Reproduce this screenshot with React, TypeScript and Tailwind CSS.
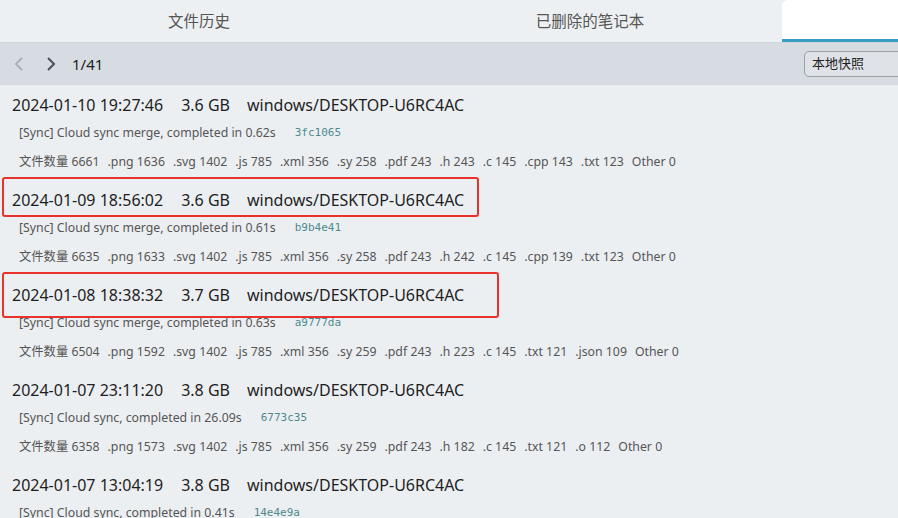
import React from "react";

type Entry = {
  time: string;
  size: string;
  host: string;
  msg: string;
  hash: string;
  stats: [string, string][];
  box?: { w: number; h: number };
};

const entries: Entry[] = [
  {
    time: "2024-01-10 19:27:46",
    size: "3.6 GB",
    host: "windows/DESKTOP-U6RC4AC",
    msg: "[Sync] Cloud sync merge, completed in 0.62s",
    hash: "3fc1065",
    stats: [
      ["文件数量", "6661"], [".png", "1636"], [".svg", "1402"], [".js", "785"], [".xml", "356"], [".sy", "258"],
      [".pdf", "243"], [".h", "243"], [".c", "145"], [".cpp", "143"], [".txt", "123"], ["Other", "0"],
    ],
  },
  {
    time: "2024-01-09 18:56:02",
    size: "3.6 GB",
    host: "windows/DESKTOP-U6RC4AC",
    msg: "[Sync] Cloud sync merge, completed in 0.61s",
    hash: "b9b4e41",
    stats: [
      ["文件数量", "6635"], [".png", "1633"], [".svg", "1402"], [".js", "785"], [".xml", "356"], [".sy", "258"],
      [".pdf", "243"], [".h", "242"], [".c", "145"], [".cpp", "139"], [".txt", "123"], ["Other", "0"],
    ],
    box: { w: 477, h: 40 },
  },
  {
    time: "2024-01-08 18:38:32",
    size: "3.7 GB",
    host: "windows/DESKTOP-U6RC4AC",
    msg: "[Sync] Cloud sync merge, completed in 0.63s",
    hash: "a9777da",
    stats: [
      ["文件数量", "6504"], [".png", "1592"], [".svg", "1402"], [".js", "785"], [".xml", "356"], [".sy", "259"],
      [".pdf", "243"], [".h", "223"], [".c", "145"], [".txt", "121"], [".json", "109"], ["Other", "0"],
    ],
    box: { w: 497, h: 46 },
  },
  {
    time: "2024-01-07 23:11:20",
    size: "3.8 GB",
    host: "windows/DESKTOP-U6RC4AC",
    msg: "[Sync] Cloud sync, completed in 26.09s",
    hash: "6773c35",
    stats: [
      ["文件数量", "6358"], [".png", "1573"], [".svg", "1402"], [".js", "785"], [".xml", "356"], [".sy", "259"],
      [".pdf", "243"], [".h", "182"], [".c", "145"], [".txt", "121"], [".o", "112"], ["Other", "0"],
    ],
  },
  {
    time: "2024-01-07 13:04:19",
    size: "3.8 GB",
    host: "windows/DESKTOP-U6RC4AC",
    msg: "[Sync] Cloud sync, completed in 0.41s",
    hash: "14e4e9a",
    stats: [],
  },
];

const font = { fontFamily: '"Noto Sans", "Noto Sans CJK SC", sans-serif' };

export default function App() {
  return (
    <div
      className="w-[898px] h-[518px] overflow-hidden bg-[#eceff2] text-[#222]"
      style={font}
    >
      {/* Tabs */}
      <div className="flex h-[43px] bg-[#edf0f3] border-b border-[#cfd6dc]">
        <div className="w-[398px] flex items-center justify-center pt-[2px] text-[15.5px] text-[#555]">文件历史</div>
        <div className="w-[384px] flex items-center justify-center pt-[2px] text-[15.5px] text-[#555]">已删除的笔记本</div>
        <div className="flex-1 bg-white rounded-tl-[6px] border-b-[3px] border-[#3a9dc0]" />
      </div>
      {/* Toolbar */}
      <div className="flex items-center h-[42px] bg-[#d6dce2]">
        <svg width="12" height="16" viewBox="0 0 12 16" className="ml-[13px]">
          <polyline points="9,2 3,8 9,14" fill="none" stroke="#a9b0b7" strokeWidth="2" />
        </svg>
        <svg width="12" height="16" viewBox="0 0 12 16" className="ml-[20px]">
          <polyline points="3,2 9,8 3,14" fill="none" stroke="#4a4f55" strokeWidth="2" />
        </svg>
        <span className="ml-[15px] text-[15px] text-[#222]">1/41</span>
        <div className="ml-auto h-[26px] w-[110px] -mr-[16px] rounded-[5px] border border-[#9aa1a8] bg-[#dfe3e8] flex items-center pl-[7px] text-[13px] text-[#222]">
          本地快照
        </div>
      </div>
      {/* List */}
      <div className="flex flex-col pt-[2px]">
        {entries.map((e, i) => (
          <div key={i} className="flex flex-col h-[95px]">
            <div className="relative h-[36px] flex items-center pl-[12px] text-[16px] text-[#1e1e1e] whitespace-nowrap">
              <span>{e.time}</span>
              <span className="ml-[18px]">{e.size}</span>
              <span className="ml-[17px]">{e.host}</span>
              {e.box && (
                <div
                  className="absolute left-[2px] top-[-5px] border-2 border-[#e8322b] rounded-[3px]"
                  style={{ width: e.box.w, height: e.box.h }}
                />
              )}
            </div>
            <div className="h-[20px] flex items-center pl-[19px] text-[12.3px] text-[#555] whitespace-nowrap">
              <span>{e.msg}</span>
              <span
                className="ml-[19px] text-[11px] text-[#4c8a8c]"
                style={{ fontFamily: '"DejaVu Sans Mono", monospace' }}
              >
                {e.hash}
              </span>
            </div>
            <div className="h-[39px] flex items-center pl-[19px] gap-[8px] text-[12.3px] text-[#555] whitespace-nowrap">
              {e.stats.map(([k, v], j) => (
                <span key={j}>
                  {k} {v}
                </span>
              ))}
            </div>
          </div>
        ))}
      </div>
    </div>
  );
}
